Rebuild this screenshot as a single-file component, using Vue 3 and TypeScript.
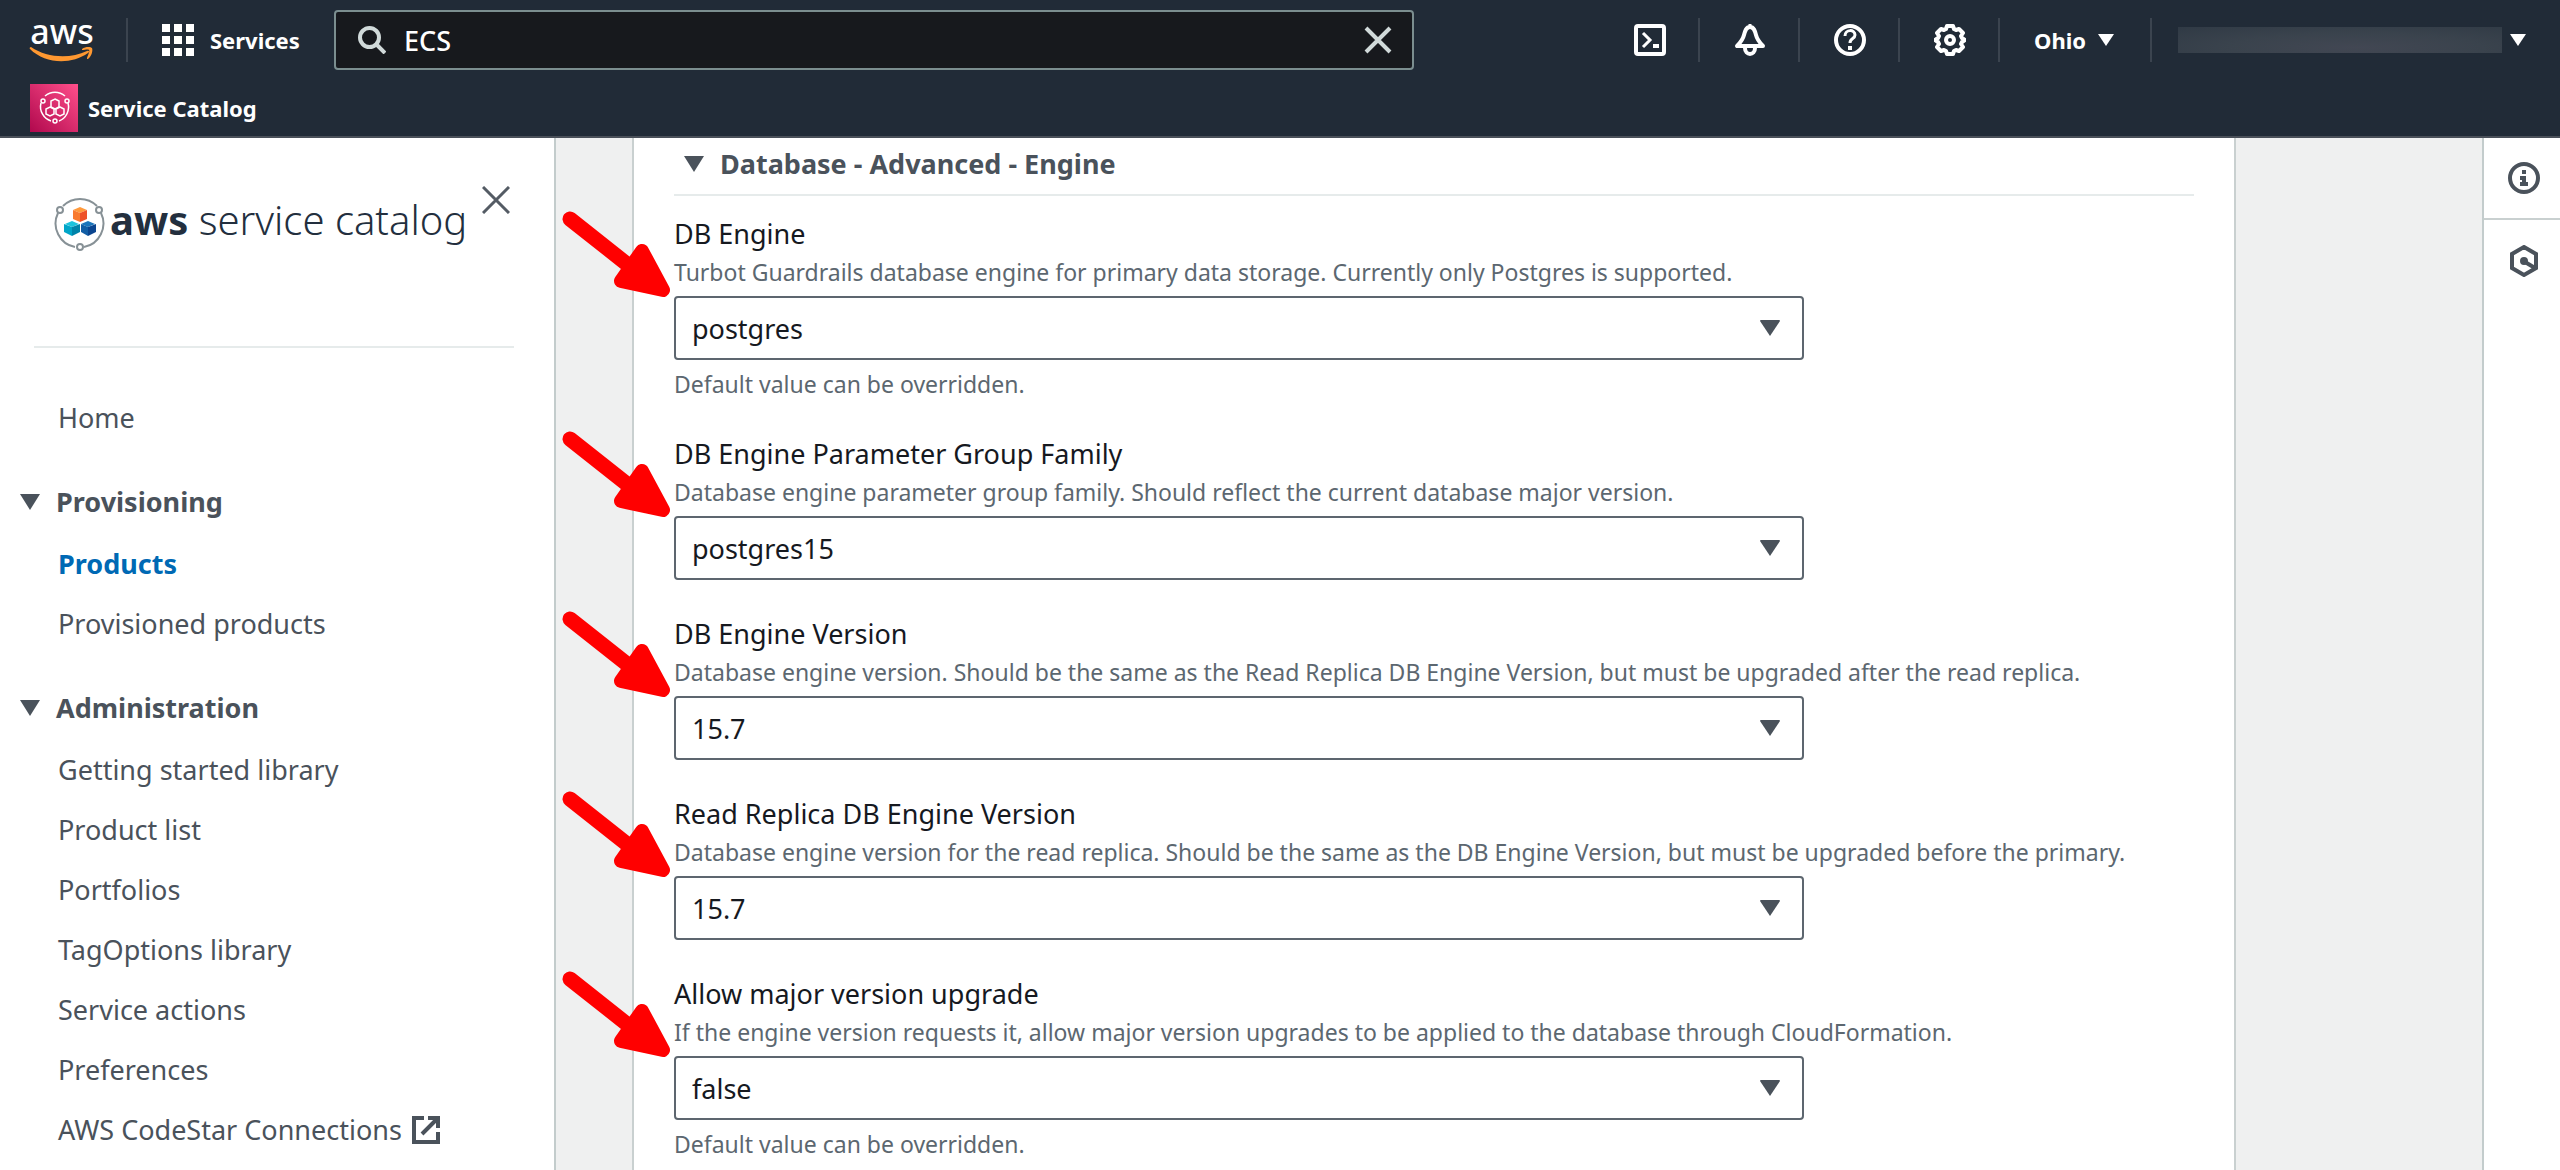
<script setup lang="ts">
import { reactive, ref } from 'vue'

interface NavItem {
  label: string
  active?: boolean
  external?: boolean
}
interface NavSection {
  title: string
  items: NavItem[]
}
interface Field {
  id: string
  label: string
  description: string
  value: string
  options: string[]
  hint?: string
}

const search = ref('ECS')

const sections: NavSection[] = [
  {
    title: 'Provisioning',
    items: [{ label: 'Products', active: true }, { label: 'Provisioned products' }],
  },
  {
    title: 'Administration',
    items: [
      { label: 'Getting started library' },
      { label: 'Product list' },
      { label: 'Portfolios' },
      { label: 'TagOptions library' },
      { label: 'Service actions' },
      { label: 'Preferences' },
      { label: 'AWS CodeStar Connections', external: true },
    ],
  },
]

const fields = reactive<Field[]>([
  {
    id: 'db-engine',
    label: 'DB Engine',
    description:
      'Turbot Guardrails database engine for primary data storage. Currently only Postgres is supported.',
    value: 'postgres',
    options: ['postgres'],
    hint: 'Default value can be overridden.',
  },
  {
    id: 'db-family',
    label: 'DB Engine Parameter Group Family',
    description:
      'Database engine parameter group family. Should reflect the current database major version.',
    value: 'postgres15',
    options: ['postgres15'],
  },
  {
    id: 'db-version',
    label: 'DB Engine Version',
    description:
      'Database engine version. Should be the same as the Read Replica DB Engine Version, but must be upgraded after the read replica.',
    value: '15.7',
    options: ['15.7'],
  },
  {
    id: 'replica-version',
    label: 'Read Replica DB Engine Version',
    description:
      'Database engine version for the read replica. Should be the same as the DB Engine Version, but must be upgraded before the primary.',
    value: '15.7',
    options: ['15.7'],
  },
  {
    id: 'major-upgrade',
    label: 'Allow major version upgrade',
    description:
      'If the engine version requests it, allow major version upgrades to be applied to the database through CloudFormation.',
    value: 'false',
    options: ['false', 'true'],
    hint: 'Default value can be overridden.',
  },
])
</script>

<template>
  <div class="page">
    <header class="topbar">
      <div class="topbar-main">
        <a class="aws-logo" href="#" aria-label="AWS home">
          <span class="aws-word">aws</span>
          <svg class="aws-smile" width="64" height="16" viewBox="0 0 64 16" aria-hidden="true">
            <path d="M1 0C17 11 40 12 57 4C59 3 60 5 58 6C41 18 15 17 0 2C-1 1 0 0 1 0Z" fill="#ff9831" />
            <path d="M52 2C56-1 61 0 62 1C63 3 62 9 58 12C57 12 57 12 57 11C58 8 60 4 59 3C58 2 55 3 52 3Z" fill="#ff9831" />
          </svg>
        </a>
        <span class="divider"></span>
        <button class="services" type="button">
          <svg width="32" height="32" viewBox="0 0 32 32" fill="#fff" aria-hidden="true">
            <path d="M0 0h8v8H0zM12 0h8v8h-8zM24 0h8v8h-8zM0 12h8v8H0zM12 12h8v8h-8zM24 12h8v8h-8zM0 24h8v8H0zM12 24h8v8h-8zM24 24h8v8h-8z" />
          </svg>
          Services
        </button>
        <div class="search">
          <svg width="28" height="28" viewBox="0 0 28 28" fill="none" stroke="#d1dada" stroke-width="4" aria-hidden="true">
            <circle cx="11.500" cy="11.500" r="9.500" />
            <path d="M18 18l9 9" />
          </svg>
          <input v-model="search" type="text" aria-label="Search" />
          <button class="plain" type="button" aria-label="Clear search">
            <svg width="28" height="28" viewBox="0 0 28 28" fill="none" stroke="#d1dada" stroke-width="4" aria-hidden="true">
              <path d="M2 2l24 24M26 2L2 26" />
            </svg>
          </button>
        </div>
        <div class="tools">
          <button class="tool" type="button" aria-label="CloudShell">
            <svg width="32" height="32" viewBox="0 0 32 32" fill="none" stroke="#fff" stroke-width="4" aria-hidden="true">
              <rect x="2" y="2" width="28" height="28" rx="2" />
              <path d="M9 9l7 7-7 7" stroke-width="3" />
              <path d="M19 22h6" />
            </svg>
          </button>
          <button class="tool" type="button" aria-label="Notifications">
            <svg width="32" height="32" viewBox="0 0 32 32" fill="none" stroke="#fff" aria-hidden="true">
              <path d="M16 3c-4 0-5 4-6 8-1 4-3 7-7 11h26c-4-4-6-7-7-11-1-4-2-8-6-8z" stroke-width="4" stroke-linejoin="round" />
              <path d="M16 0v4" stroke-width="3" />
              <path d="M11 24c0 8 10 8 10 0" stroke-width="4" />
            </svg>
          </button>
          <button class="tool" type="button" aria-label="Help">
            <svg width="32" height="32" viewBox="0 0 32 32" fill="none" stroke="#fff" aria-hidden="true">
              <circle cx="16" cy="16" r="14" stroke-width="4" />
              <path d="M11 12c0-7 10-7 10-1 0 4-5 3-5 8" stroke-width="3" />
              <path d="M16 22v4" stroke-width="4" />
            </svg>
          </button>
          <button class="tool" type="button" aria-label="Settings">
            <svg width="32" height="32" viewBox="0 0 32 32" fill="none" stroke="#fff" stroke-width="4" aria-hidden="true">
              <circle cx="16" cy="16" r="4" />
              <path d="M13 2h6l1 3 2 1 3-1 4 4-2 3 1 2 3 2-3 2-1 2 2 3-4 4-3-1-2 1-1 3h-6l-1-3-2-1-3 1-4-4 2-3-1-2-3-2 3-2 1-2-2-3 4-4 3 1 2-1z" stroke-linejoin="round" />
            </svg>
          </button>
          <button class="region" type="button">
            Ohio
            <svg width="16" height="12" viewBox="0 0 16 12" fill="#fff" aria-hidden="true"><path d="M0 0h16l-8 12z" /></svg>
          </button>
          <button class="account" type="button" aria-label="Account">
            <span class="account-mask"></span>
            <svg width="16" height="12" viewBox="0 0 16 12" fill="#fff" aria-hidden="true"><path d="M0 0h16l-8 12z" /></svg>
          </button>
        </div>
      </div>
      <nav class="favorites" aria-label="Favorites">
        <a class="favorite" href="#">
          <svg width="48" height="48" viewBox="0 0 48 48" fill="none" stroke="#fff" aria-hidden="true">
            <defs>
              <linearGradient id="fav-bg" x1="0" y1="1" x2="1" y2="0">
                <stop offset="0" stop-color="#b0084d" />
                <stop offset="1" stop-color="#ff4f8b" />
              </linearGradient>
            </defs>
            <rect width="48" height="48" fill="url(#fav-bg)" stroke="none" />
            <g stroke-width="1.500">
              <path d="M15 12a15 15 0 0 1 20 0M38 19a15 15 0 0 1-9 18M21 37a15 15 0 0 1-10-18" />
              <circle cx="13" cy="17" r="2" />
              <circle cx="37" cy="17" r="2" />
              <circle cx="25" cy="37" r="2" />
              <path d="M25 15l4 2v6l-4 2-4-2v-6zM20 23l4 2v5l-4 2-4-2v-5zM30 23l4 2v5l-4 2-4-2v-5z" />
            </g>
          </svg>
          Service Catalog
        </a>
      </nav>
    </header>

    <div class="body">
      <aside class="sidebar">
        <div class="sidebar-head">
          <a class="brand" href="#">
            <svg width="52" height="56" viewBox="0 0 52 56" fill="none" aria-hidden="true">
              <g stroke="#879196" stroke-width="2">
                <path d="M9 10a24 24 0 0 1 34 0M47 17a24 24 0 0 1-17 34M21 51A24 24 0 0 1 4 17" />
                <circle cx="6" cy="14" r="3" />
                <circle cx="45" cy="14" r="3" />
                <circle cx="26" cy="51" r="3" />
              </g>
              <path d="M26 11l7 3-7 3-7-3z" fill="#ff9a3c" />
              <path d="M19 14l7 3v9l-7-3z" fill="#f97a2e" />
              <path d="M33 14l-7 3v9l7-3z" fill="#ee5128" />
              <path d="M18 25l7 3-7 3-7-3z" fill="#1cc3dc" />
              <path d="M10 28l8 3v9l-8-4z" fill="#00a5c8" />
              <path d="M26 28l-8 3v9l8-4z" fill="#0083a9" />
              <path d="M34 25l7 3-7 3-7-3z" fill="#1b75bb" />
              <path d="M27 28l7 3v9l-7-4z" fill="#125ea5" />
              <path d="M42 28l-8 3v9l8-4z" fill="#0b458f" />
            </svg>
            <span class="brand-name"><strong>aws</strong> service catalog</span>
          </a>
          <button class="plain" type="button" aria-label="Close navigation">
            <svg width="28" height="28" viewBox="0 0 28 28" fill="none" stroke="#545b64" stroke-width="3" aria-hidden="true">
              <path d="M1 1l26 26M27 1L1 27" />
            </svg>
          </button>
        </div>
        <nav class="side-nav" aria-label="Service Catalog">
          <a class="nav-item" href="#">Home</a>
          <section v-for="section in sections" :key="section.title" class="nav-section">
            <button class="nav-title" type="button">
              <svg width="20" height="16" viewBox="0 0 20 16" fill="#4a525b" aria-hidden="true"><path d="M0 0h20L10 16z" /></svg>
              {{ section.title }}
            </button>
            <a
              v-for="item in section.items"
              :key="item.label"
              class="nav-item"
              :class="{ active: item.active }"
              href="#"
            >
              {{ item.label }}
              <svg v-if="item.external" width="28" height="28" viewBox="0 0 28 28" fill="none" stroke="#4a525b" stroke-width="4" aria-label="Opens in a new tab">
                <path d="M12 2H2v24h24V16" />
                <path d="M16 2h10v10M25 3L10 18" />
              </svg>
            </a>
          </section>
        </nav>
      </aside>

      <main class="content">
        <section class="panel">
          <h2 class="panel-title">
            <button class="panel-toggle" type="button">
              <svg width="20" height="16" viewBox="0 0 20 16" fill="#4a525b" aria-hidden="true"><path d="M0 0h20L10 16z" /></svg>
              Database - Advanced - Engine
            </button>
          </h2>
          <div class="fields">
            <div v-for="field in fields" :key="field.id" class="field">
              <label :for="field.id">{{ field.label }}</label>
              <p class="description">{{ field.description }}</p>
              <div class="select">
                <select :id="field.id" v-model="field.value">
                  <option v-for="option in field.options" :key="option" :value="option">{{ option }}</option>
                </select>
                <svg class="select-caret" width="20" height="16" viewBox="0 0 20 16" fill="#4a525b" aria-hidden="true"><path d="M1 0h18q1 0 1 1L10 16 0 1q0-1 1-1z" /></svg>
                <svg class="pointer" width="110" height="88" viewBox="0 0 110 88" stroke="#f00" fill="#f00" stroke-linecap="round" stroke-linejoin="round" aria-hidden="true">
                  <path d="M8 8L75 61" stroke-width="15" fill="none" />
                  <path d="M80 40L101 79L59 70Z" stroke-width="14" />
                </svg>
              </div>
              <p v-if="field.hint" class="description hint">{{ field.hint }}</p>
            </div>
          </div>
        </section>
      </main>

      <aside class="help-rail" aria-label="Help tools">
        <button type="button" aria-label="Info">
          <svg width="32" height="32" viewBox="0 0 32 32" fill="none" stroke="#4a525b" stroke-width="4" aria-hidden="true">
            <circle cx="16" cy="16" r="14" />
            <path d="M14 10h4M12 16h4v6M12 22h8" />
          </svg>
        </button>
        <button type="button" aria-label="Assistant">
          <svg width="32" height="32" viewBox="0 0 32 32" fill="none" stroke="#4a525b" stroke-width="4" aria-hidden="true">
            <path d="M16 2l12 7v14l-12 7-12-7V9z" />
            <circle cx="16" cy="16" r="2" />
            <path d="M17 17l10 6" />
          </svg>
        </button>
      </aside>
    </div>
  </div>
</template>

<style>
body {
  margin: 0;
  background: #fff;
}
</style>

<style scoped>
* {
  box-sizing: border-box;
}
.page {
  font-family: 'Noto Sans', 'Open Sans', sans-serif;
  font-size: 27px;
  color: #16191f;
}
button,
input,
select {
  font: inherit;
  color: inherit;
}
button {
  padding: 0;
  border: 0;
  background: none;
}
a {
  color: inherit;
  text-decoration: none;
}
svg {
  display: block;
  flex: none;
}
.plain {
  display: flex;
}

.topbar {
  background: #212b37;
  border-bottom: 2px solid #4a5059;
  color: #fff;
  font-size: 22px;
  font-weight: 700;
}
.topbar-main {
  display: flex;
  align-items: center;
  height: 80px;
  padding-left: 30px;
}
.aws-logo {
  display: flex;
  flex-direction: column;
  width: 64px;
  font-size: 34px;
  font-weight: 500;
  line-height: 28px;
  text-align: center;
}
.aws-smile {
  margin-top: 2px;
  overflow: visible;
}
.divider {
  width: 2px;
  height: 44px;
  margin: 0 34px 0 32px;
  background: #3b444f;
}
.services {
  display: flex;
  align-items: center;
  gap: 16px;
  width: 138px;
  margin-right: 34px;
}
.search {
  display: flex;
  flex: 0 1 1080px;
  align-items: center;
  gap: 18px;
  height: 60px;
  padding: 0 20px 0 22px;
  border: 2px solid #7b8e8f;
  border-radius: 4px;
  background: #17191d;
}
.search input {
  flex: 1;
  min-width: 0;
  padding: 0;
  border: 0;
  outline: 0;
  background: none;
  font-size: 27px;
  font-weight: 500;
}
.tools {
  display: flex;
  flex: none;
  margin-left: auto;
}
.tool,
.region,
.account {
  display: flex;
  align-items: center;
  height: 44px;
  border-right: 2px solid #3b444f;
}
.tool {
  justify-content: center;
  width: 100px;
  padding-left: 2px;
}
.region {
  justify-content: space-between;
  width: 152px;
  padding: 0 36px 0 34px;
}
.account {
  gap: 8px;
  padding: 0 34px 0 26px;
  border-right: 0;
}
.account-mask {
  width: 324px;
  height: 26px;
  background: radial-gradient(ellipse at 55% 80%, #424753, #3a434d 50%, #303a45);
}
.favorites {
  display: flex;
  align-items: center;
  height: 56px;
  padding-left: 30px;
}
.favorite {
  display: flex;
  align-items: center;
  gap: 10px;
}

.body {
  display: flex;
  min-height: calc(100vh - 138px);
  background: #eff0f0;
}
.sidebar {
  flex: none;
  width: 556px;
  border-right: 2px solid #c3cccc;
  background: #fff;
  color: #4a525b;
}
.sidebar-head {
  display: flex;
  align-items: flex-start;
  justify-content: space-between;
  height: 210px;
  margin: 0 40px 0 34px;
  padding: 48px 4px 0 20px;
  border-bottom: 2px solid #e6ebeb;
}
.brand {
  display: flex;
  align-items: flex-start;
  gap: 4px;
  margin-top: 10px;
  color: #232f3e;
  font-size: 40px;
  font-weight: 300;
  line-height: 48px;
  white-space: nowrap;
}
.brand strong {
  font-weight: 700;
}
.side-nav {
  padding: 50px 20px 4px;
}
.nav-item {
  display: flex;
  align-items: center;
  gap: 10px;
  margin-left: 38px;
  line-height: 40px;
}
.nav-item.active {
  color: #0069b4;
  font-weight: 700;
}
.nav-section {
  display: flex;
  flex-direction: column;
  gap: 20px;
  margin-top: 44px;
}
.nav-title {
  display: flex;
  align-items: center;
  gap: 16px;
  margin-bottom: 2px;
  font-weight: 700;
  line-height: 40px;
}

.content {
  flex: 1;
  min-width: 0;
  padding: 0 246px 0 76px;
}
.panel {
  min-height: 100%;
  padding: 8px 40px;
  border: solid #c9d0d0;
  border-width: 0 2px;
  background: #fff;
}
.panel-title {
  margin: 0;
  padding: 0 0 12px 10px;
  border-bottom: 2px solid #e6ebeb;
  color: #4a525b;
  font-size: 27px;
  line-height: 36px;
}
.panel-toggle {
  display: flex;
  align-items: center;
  gap: 16px;
}
.fields {
  display: flex;
  flex-direction: column;
  gap: 32px;
  padding-top: 16px;
}
.field label {
  display: block;
  line-height: 44px;
}
.description {
  margin: 0;
  color: #5c6770;
  font-size: 23px;
  line-height: 32px;
}
.hint {
  margin-top: 8px;
}
.select {
  position: relative;
  width: calc(75% - 10px);
  margin-top: 8px;
}
.select select {
  display: block;
  width: 100%;
  height: 64px;
  padding: 0 56px 0 16px;
  border: 2px solid #5d666f;
  border-radius: 4px;
  background: #fff;
  appearance: none;
}
.select-caret {
  position: absolute;
  top: 24px;
  right: 24px;
}
.pointer {
  position: absolute;
  top: -85px;
  left: -112px;
}

.help-rail {
  flex: none;
  width: 78px;
  border-left: 2px solid #c3cccc;
  background: #fff;
}
.help-rail button {
  display: flex;
  align-items: center;
  justify-content: center;
  width: 100%;
  height: 82px;
  padding-left: 4px;
}
.help-rail button:first-child {
  border-bottom: 2px solid #c9d0d0;
}
</style>
